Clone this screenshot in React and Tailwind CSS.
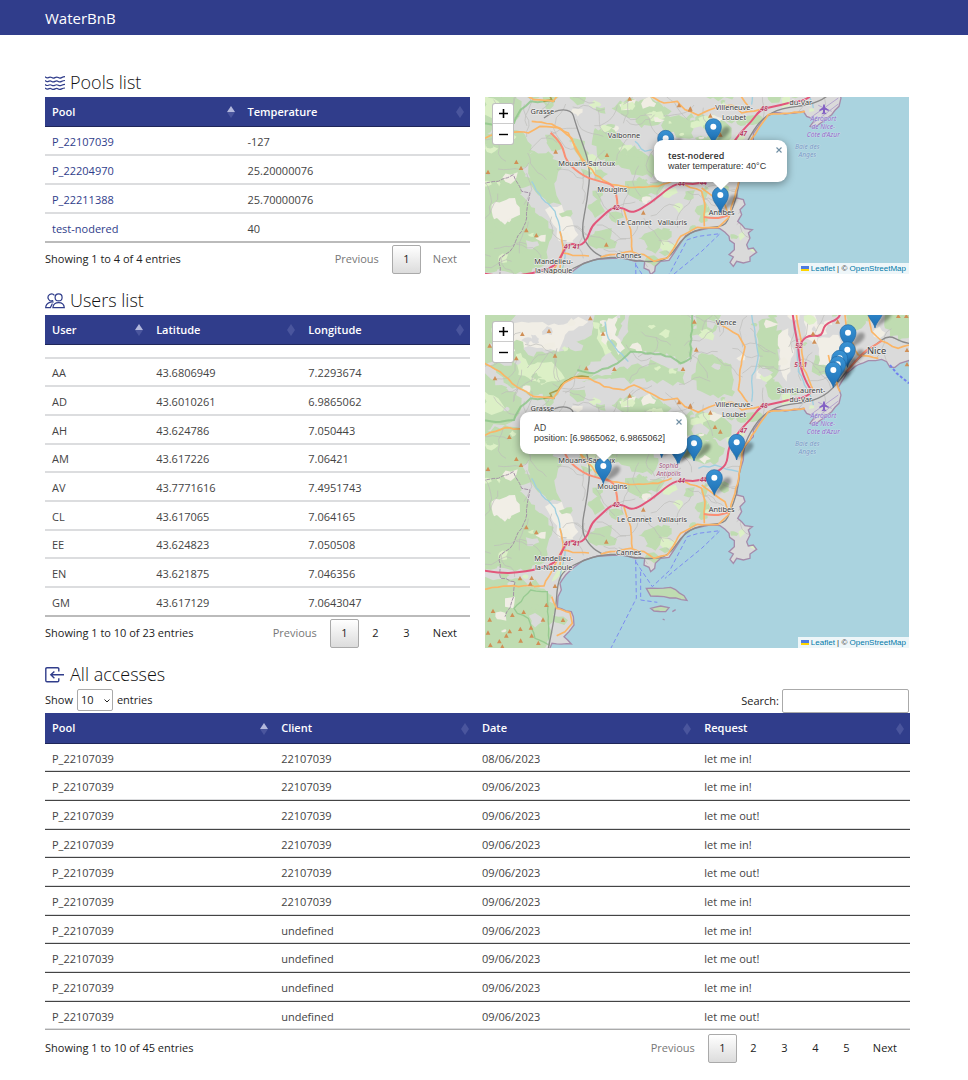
import React from "react";

/* ---------- Map geometry (one shared drawing, three units per pixel) ---------- */

function makeRandom(seed) {
  let s = seed;
  return () => {
    s = (s * 1664525 + 1013904223) % 4294967296;
    return s / 4294967296;
  };
}

function pairs(text) {
  return text.split(" ").map((p) => p.split(",").map(Number));
}

/* Subdivides a line and nudges the middle points so that it looks natural. */
function rough(text, amount, seed, closed) {
  const rnd = makeRandom(seed);
  const pts = pairs(text);
  if (closed) pts.push(pts[0]);
  let d = `M${pts[0][0]} ${pts[0][1]}`;
  for (let i = 1; i < pts.length; i++) {
    const [ax, ay] = pts[i - 1];
    const [bx, by] = pts[i];
    const n = Math.max(1, Math.floor(Math.hypot(bx - ax, by - ay) / 14));
    for (let k = 1; k < n; k++) {
      const t = k / n;
      const x = ax + (bx - ax) * t + (rnd() - 0.5) * amount * 2;
      const y = ay + (by - ay) * t + (rnd() - 0.5) * amount * 2;
      d += `L${x.toFixed(1)} ${y.toFixed(1)}`;
    }
    d += `L${bx} ${by}`;
  }
  return closed ? d + "Z" : d;
}

function curve(text) {
  const p = pairs(text);
  let d = `M${p[0][0]} ${p[0][1]}`;
  for (let i = 1; i < p.length - 1; i++) {
    const mx = (p[i][0] + p[i + 1][0]) / 2;
    const my = (p[i][1] + p[i + 1][1]) / 2;
    d += `Q${p[i][0]} ${p[i][1]} ${mx} ${my}`;
  }
  const l = p[p.length - 1];
  return d + `L${l[0]} ${l[1]}`;
}

const COAST =
  "190,1010 201,985 259,987 237,965 252,950 267,930 265,905 259,890 217,878 219,845 229,825 225,805 242,780 267,757 297,735 337,723 397,721 427,723 452,731 467,727 479,731 477,750 492,757 497,770 509,760 511,745 527,730 552,727 567,705 587,675 602,653 630,640 670,631 705,632 720,643 732,655 734,667 748,677 748,695 732,710 745,717 735,733 745,745 755,730 775,735 795,730 795,717 815,703 805,690 790,693 785,680 795,660 790,645 802,635 780,632 770,620 758,610 770,590 765,575 780,560 775,545 755,540 760,505 763,475 775,435 780,395 795,375 805,365 805,345 820,325 845,295 870,283 900,288 930,285 955,280 965,295 990,305 975,325 990,330 1015,310 1040,290 1062,265 1068,240 1060,217 1070,200 1085,175 1110,155 1150,137 1190,133 1205,140 1215,157 1230,157 1245,145 1290,132";

const COAST_LINE = rough(COAST, 2, 5, false);
const SEA = COAST_LINE + "L1290 1010Z";

const FORESTS = [
  "-10,-10 90,-10 60,60 130,120 220,110 320,60 330,-10 420,-10 400,60 350,130 300,160 250,190 200,250 130,240 70,210 20,160 -10,150",
  "-10,170 50,210 110,250 100,300 60,330 -10,340",
  "-10,350 60,330 120,350 150,400 110,450 140,500 90,540 60,610 90,660 60,700 -10,720",
  "-10,545 80,520 150,570 190,610 200,660 180,740 120,770 60,760 -10,760",
  "-10,785 90,790 160,820 200,840 205,900 185,990 175,1010 -10,1010",
  "120,415 190,400 230,450 210,510 230,560 190,560 150,520",
  "440,-10 620,-10 625,100 600,145 520,110 450,110 400,140 370,100 430,50",
  "290,200 360,180 440,150 510,140 600,170 600,210 500,195 430,200 340,190",
  "380,270 430,240 520,250 560,280 520,320 470,330 430,300",
  "520,300 640,290 700,300 740,330 730,370 650,375 590,360 540,345",
  "330,330 390,320 420,380 470,400 520,430 500,480 440,470 400,440 350,430 320,380",
  "640,120 700,130 740,170 750,230 700,250 650,230 620,180",
  "640,-10 720,-10 700,30 660,70 640,60",
  "820,20 870,10 890,80 880,160 850,210 820,150",
  "600,380 680,370 720,400 700,440 640,440 590,430",
  "420,490 470,490 540,500 510,530 460,545 430,530",
  "650,520 670,520 668,610 648,615",
  "330,640 380,630 390,690 340,690 310,680",
  "310,560 350,540 360,580 330,600",
  "460,660 500,640 560,640 560,690 500,700",
  "990,120 1030,110 1040,160 1010,190 980,170",
  "1080,-10 1140,-10 1130,40 1100,60 1080,30",
  "1200,-10 1290,-10 1290,60 1240,80 1200,40",
  "840,210 880,200 900,240 860,255",
  "180,350 220,360 240,390 200,400",
  "260,360 300,370 310,420 280,430",
];

const PALE = [
  "20,40 110,20 220,30 280,5 310,20 240,60 220,110 140,95 80,110 30,80",
  "370,10 400,0 390,60 420,100 400,120 365,70",
  "20,560 90,540 105,590 60,620 30,610",
  "180,575 230,560 265,620 280,650 262,668 222,670 205,620",
  "960,10 990,0 1010,50 990,90 965,70",
  "880,60 910,40 925,120 905,200 885,160",
  "1000,70 1060,60 1070,120 1050,160 1000,150",
  "60,850 90,845 85,880 60,875",
];

const MEADOW = [
  "0,230 40,250 60,280 20,300 0,290",
  "80,60 130,150 200,140 240,190 170,210 100,180",
  "530,665 570,660 575,690 545,708 525,690",
  "200,800 240,770 235,740 215,770",
  "480,290 530,280 540,300 500,310",
  "400,390 440,380 450,400 420,410",
  "640,300 690,290 700,310 650,325",
  "660,600 668,560 676,600",
  "310,430 340,440 330,470 305,455",
  "890,240 915,230 920,260 890,270",
  "340,20 350,60 380,110 360,120 335,70",
  "760,650 775,640 780,655 765,668",
];

function scatter() {
  const rnd = makeRandom(77);
  const out = [];
  for (let i = 0; i < 330; i++) {
    const x = rnd() * 1230;
    const y = rnd() * 990;
    const r = 5 + rnd() * 15;
    const kind = rnd();
    const pts = [];
    for (let a = 0; a < 8; a++) {
      const q = r * (0.4 + rnd() * 0.9);
      pts.push(
        `${(x + Math.cos((a * Math.PI) / 4) * q * 1.3).toFixed(1)},${(y + Math.sin((a * Math.PI) / 4) * q).toFixed(1)}`,
      );
    }
    const fill = kind < 0.42 ? "#bfdcb1" : kind < 0.6 ? "#dcf0c6" : kind < 0.88 ? "#dadada" : "#f0ede3";
    out.push({ points: pts.join(" "), fill });
  }
  return out;
}

function lanes() {
  const rnd = makeRandom(19);
  const out = [];
  for (let i = 0; i < 170; i++) {
    let x = rnd() * 1250;
    let y = rnd() * 760;
    let a = rnd() * 6.28;
    let d = `M${x.toFixed(0)} ${y.toFixed(0)}`;
    for (let k = 0; k < 6; k++) {
      a += (rnd() - 0.5) * 1.5;
      x += Math.cos(a) * 17;
      y += Math.sin(a) * 17;
      d += `L${x.toFixed(0)} ${y.toFixed(0)}`;
    }
    out.push(d);
  }
  return out.join("");
}

const SCATTER = scatter();
const LANES = lanes();

const MOTORWAYS = [
  "-10,766 47,775 97,773 147,765 197,750 222,730 237,695 257,675 287,685 309,660 319,625 347,600 382,567 417,570 442,587 497,555 557,505 590,495 640,500 690,475 725,450 730,405 738,385 765,345 800,310 825,275 860,267 920,253 960,247 982,230 965,205 945,155 940,95 930,45 922,-10",
  "945,95 950,75 975,60 1010,65 1018,28 1060,12 1068,-10",
];

const PRIMARY = [
  "197,344 232,376 242,431 297,476 347,491 387,501 397,546 397,566",
  "657,597 690,603 730,592",
  "1085,170 1130,115 1170,90 1190,78",
];

const SECONDARY = [
  "-10,140 45,170 95,215 147,245 205,250 237,205 270,187 312,190 357,215 417,225 447,210 497,235 537,255 577,250 600,275 640,292 690,270 740,262 770,285 825,275",
  "-10,365 60,338 130,345 165,325 220,330 260,360 290,420 330,470 380,500 430,508 520,505 560,490",
  "140,310 200,318 250,345 275,400 297,440",
  "700,25 760,60 780,95 765,165 760,225 790,265",
  "417,575 437,635 442,700",
  "347,717 437,700 477,710 507,730 547,720 587,655 637,628 700,628 730,600 750,535 762,480 775,400 810,350 850,290 960,280",
  "147,815 177,813 212,745 232,705 262,712 312,714",
  "-10,825 57,813 147,813",
  "200,845 215,880 255,893 262,925 240,950 215,962",
  "658,625 660,560 650,520 600,500",
  "650,510 690,540 720,560 730,590",
  "934,-5 950,90 955,160 985,225",
  "1080,0 1090,60 1120,120 1180,130",
  "1150,-10 1160,50 1190,78 1240,100 1272,90",
  "1030,120 1050,190 1065,230",
  "225,750 235,690 225,640",
];

const RAILWAYS = [
  "190,1000 212,895 217,805 237,765 297,735 347,720 407,717 437,727 497,732 550,725 600,650 660,628 720,625 735,590 755,540 762,480 772,420 785,370 830,300 890,270 970,262 1030,237 1080,175 1120,130 1170,90 1210,60 1250,80 1272,85",
  "177,300 210,275 260,276 270,310 283,350 317,446 307,546 287,646 317,696 350,716",
];

const STREAMS = [
  "140,490 170,540 210,580 225,640 240,700 230,760 228,800",
  "360,20 370,70 400,110 430,140",
  "800,-10 810,60 820,120 800,200 800,260",
  "925,10 935,90 940,170 975,240 985,270",
  "450,370 480,400 500,395",
  "640,460 690,450 740,465 760,470",
];

const FERRIES = [
  "452,735 454,850 375,1005",
  "467,770 467,855 517,862",
  "452,740 502,815 555,765 607,665 640,655 705,647 650,700 540,790",
];

const PEAKS =
  "316,10 112,57 192,48 14,92 94,130 210,122 304,160 388,162 582,262 30,190 434,242 616,272 594,162 634,104 73,366 9,462 94,432 108,450 212,401 366,411 615,275 676,293 706,350 690,336 475,584 364,680 124,637 154,652 105,790 140,789 136,806 210,813 184,870 116,891 174,914 234,915 24,888 14,914 82,900 138,938 74,949 106,942 9,953 43,979 64,962 107,977 140,962 16,990 52,995 160,984 354,56 628,20 984,56 988,80 1058,20 1264,3 1240,3 1266,105 1266,148";

const REFS = [
  ["48", 837, 272],
  ["47", 775, 346],
  ["52", 942, 92],
  ["51.1", 947, 148],
  ["44", 655, 494],
  ["44", 589, 497],
  ["42", 393, 567],
  ["41", 247, 684],
  ["41", 274, 684],
];

const TOWNS = [
  ["Grasse", 172, 278],
  ["Valbonne", 417, 350],
  ["Mouans-Sartoux", 305, 434],
  ["Mougins", 382, 513],
  ["Le Cannet", 448, 613],
  ["Vallauris", 562, 613],
  ["Cannes", 431, 711],
  ["Mandelieu-", 206, 728],
  ["la-Napoule", 206, 755],
  ["Vence", 723, 21],
  ["Saint-Laurent-", 948, 224],
  ["du-Var", 947, 252],
  ["Villeneuve-", 747, 267],
  ["Loubet", 747, 296],
  ["Antibes", 710, 583],
];

const MARINE = [
  ["Aéroport", 1015, 301, "#8a66c8"],
  ["de Nice-", 1015, 325, "#8a66c8"],
  ["Côte d'Azur", 1015, 349, "#8a66c8"],
  ["Baie des", 967, 384, "#7098c4"],
  ["Anges", 967, 408, "#7098c4"],
];

function Marker({ x, y }) {
  return (
    <g transform={`translate(${x} ${y})`}>
      <path d="M0 52L20 16Q34 -6 48 2Q56 14 36 30Z" fill="#000" opacity="0.32" filter="url(#soft)" />
      <path
        d="M0 53C-5 32 -24 22 -24 0A24 24 0 1 1 24 0C24 22 5 32 0 53Z"
        fill="url(#pin)"
        stroke="#2268a3"
        strokeWidth="2"
      />
      <circle r="9" fill="#fff" />
    </g>
  );
}

/* `covered` lists the place names that a popup or the map's edge hides. */
function MapDrawing({ viewBox, markers, label, covered }) {
  const shown = (list) => list.filter(([t]) => !covered.includes(t));
  return (
    <svg
      viewBox={viewBox}
      preserveAspectRatio="xMinYMin slice"
      className="absolute inset-0 h-full w-full font-['Noto_Sans',sans-serif]"
      role="img"
      aria-label={label}
    >
      <defs>
        <filter id="soft" x="-30%" y="-30%" width="160%" height="160%">
          <feGaussianBlur stdDeviation="5" />
        </filter>
        <linearGradient id="pin" x1="0" y1="0" x2="0" y2="1">
          <stop offset="0" stopColor="#3a93d4" />
          <stop offset="1" stopColor="#1c6fb4" />
        </linearGradient>
      </defs>
      <rect x="-10" y="-10" width="1300" height="1020" fill="#dadada" />
      {FORESTS.map((f, i) => (
        <path key={i} d={rough(f, 10, i + 31, true)} fill="#bfdcb1" />
      ))}
      {MEADOW.map((f, i) => (
        <path key={i} d={rough(f, 5, i + 71, true)} fill="#dcf0c6" />
      ))}
      {PALE.map((f, i) => (
        <path key={i} d={rough(f, 6, i + 51, true)} fill="#f1eee6" />
      ))}
      {SCATTER.map((s, i) => (
        <polygon key={i} points={s.points} fill={s.fill} />
      ))}
      <path d={LANES} fill="none" stroke="#bdbdb9" strokeWidth="2" />
      {STREAMS.map((s) => (
        <path key={s} d={rough(s, 3, 8, false)} fill="none" stroke="#9fcfe0" strokeWidth="4" />
      ))}
      <g fill="none" stroke="#8fc78b" strokeWidth="6" opacity="0.85">
        <path d={rough("-10,315 47,320 87,315 107,275 137,250 177,250 210,250", 3, 3, false)} />
        <path d={rough("277,165 327,175 397,145 437,110 497,115 557,125 587,145 617,130 622,-10", 3, 4, false)} />
        <path d={rough("97,895 87,880 137,825 187,830 192,990 150,970 130,910 97,895", 2, 6, false)} strokeWidth="4" />
      </g>
      <path
        d={rough("-10,500 40,490 85,470 110,520 135,525 125,600 110,640 75,700 45,720 47,790 90,800 80,860 60,905", 3, 9, false)}
        fill="none"
        stroke="#a493a6"
        strokeWidth="3"
        strokeDasharray="12 3"
      />
      <path d={rough("175,250 200,245 195,235 220,225 240,200 275,185 312,186", 3, 10, false)} fill="none" stroke="#a8a04c" strokeWidth="5" />
      <path d={SEA} fill="#aad3df" />
      <path d={COAST_LINE} fill="none" stroke="#a58cab" strokeWidth="4" />
      <g fill="#bfdcb1" stroke="#a58cab" strokeWidth="4">
        <path d={rough("484,820 517,820 557,817 597,842 606,856 537,845 497,843", 2, 2, true)} />
        <path d={rough("497,880 527,873 552,878 542,890 507,888", 1, 2, true)} />
        <path d="M562 890l10-6M533 912l6 3" />
      </g>
      {RAILWAYS.map((r) => (
        <path key={r} d={curve(r)} fill="none" stroke="#8a8a8a" strokeWidth="4" />
      ))}
      {SECONDARY.map((r) => (
        <path key={r} d={rough(r, 2, 12, false)} fill="none" stroke="#fbb566" strokeWidth="5" strokeLinejoin="round" />
      ))}
      {PRIMARY.map((r) => (
        <path key={r} d={curve(r)} fill="none" stroke="#fa8f74" strokeWidth="6" />
      ))}
      {MOTORWAYS.map((r) => (
        <path key={r} d={curve(r)} fill="none" stroke="#e2567a" strokeWidth="6" />
      ))}
      {FERRIES.map((r) => (
        <path key={r} d={`M${r.replaceAll(" ", "L")}`} fill="none" stroke="#7c8cf0" strokeWidth="3" strokeDasharray="13 8" />
      ))}
      <path d="M1215 150L1235 175L1272 205" fill="none" stroke="#7080f0" strokeWidth="6" strokeDasharray="9 6" />
      {pairs(PEAKS).map(([x, y], i) => (
        <path key={i} d={`M${x} ${y - 7}l7 13h-14z`} fill="#d08f55" />
      ))}
      <g stroke="#b4a5cf" strokeWidth="3" fill="none">
        <path d="M975 300L1060 240M985 315L1060 258M1000 262L1040 280" />
      </g>
      <path
        d="M1017 259c3 0 3 5 3 9l11 7v4l-11-4v8l4 4v2l-7-2l-7 2v-2l4-4v-8l-11 4v-4l11-7c0-4 0-9 3-9z"
        fill="#8461c4"
      />
      <g textAnchor="middle" dominantBaseline="central" paintOrder="stroke" strokeLinejoin="round">
        <g fontSize="20" fontStyle="italic" fontWeight="600" fill="#b8325c" stroke="#e6dcdc" strokeWidth="3">
          {shown(REFS).map(([t, x, y]) => (
            <text key={`${t}${x}`} x={x} y={y}>{t}</text>
          ))}
        </g>
        <g fontSize="22" fill="#3d3d3d" stroke="#ececec" strokeWidth="4">
          {shown(TOWNS).map(([t, x, y]) => (
            <text key={t} x={x} y={y}>{t}</text>
          ))}
          {shown([["Nice"]]).map(([t]) => (
            <text key={t} x="1175" y="105" fontSize="28">{t}</text>
          ))}
        </g>
        <g fontSize="19" fontStyle="italic" fill="#a0507a" stroke="#ececec" strokeWidth="3">
          {shown([["Sophia", 551, 450], ["Antipolis", 551, 475]]).map(([t, x, y]) => (
            <text key={t} x={x} y={y}>{t}</text>
          ))}
        </g>
        <g fontSize="20" fontStyle="italic" stroke="#d5e4ec" strokeWidth="2">
          {MARINE.map(([t, x, y, fill]) => (
            <text key={t} x={x} y={y} fill={fill}>{t}</text>
          ))}
        </g>
      </g>
      {markers.map(([x, y]) => (
        <Marker key={`${x}-${y}`} x={x} y={y} />
      ))}
    </svg>
  );
}

function LeafletMap({ viewBox, markers, label, covered, popupClass, popupTitle, popupText }) {
  return (
    <div className="relative mr-px mt-[30px] overflow-hidden bg-[#aad3df]">
      <MapDrawing viewBox={viewBox} markers={markers} label={label} covered={covered} />
      <div className="absolute left-[7px] top-[6px] w-[22px] rounded-[3px] border border-black/25 bg-white">
        <button type="button" aria-label="Zoom in" className="flex h-5 w-full items-center justify-center border-b border-[#ccc]">
          <svg width="9" height="9" viewBox="0 0 9 9" aria-hidden="true">
            <path d="M0 4.5H9M4.5 0V9" stroke="#000" strokeWidth="1.6" />
          </svg>
        </button>
        <button type="button" aria-label="Zoom out" className="flex h-5 w-full items-center justify-center">
          <svg width="9" height="9" viewBox="0 0 9 9" aria-hidden="true">
            <path d="M0 4.5H9" stroke="#000" strokeWidth="1.4" />
          </svg>
        </button>
      </div>
      <div className={`absolute ${popupClass}`}>
        <div className="flex h-[42px] flex-col justify-center rounded-[9px] bg-white px-[14px] pb-px text-[9px] leading-[11px] text-[#333] shadow-[0_2px_9px_rgba(0,0,0,0.4)]">
          {popupTitle}
          <span className="whitespace-nowrap font-['Liberation_Sans',sans-serif]">{popupText}</span>
        </div>
        <svg width="16" height="8" viewBox="0 0 16 8" className="mx-auto block" aria-hidden="true">
          <path d="M0 0H16L8 8Z" fill="#fff" />
        </svg>
        <button type="button" aria-label="Close popup" className="absolute right-[5px] top-[7px]">
          <svg width="6" height="6" viewBox="0 0 6 6" className="block" aria-hidden="true">
            <path d="M.5 .5L5.5 5.5M5.5 .5L.5 5.5" stroke="#6f8ea3" strokeWidth="1.1" />
          </svg>
        </button>
      </div>
      <div className="absolute bottom-0 right-0 flex h-[11px] items-center bg-white/80 px-[3px] font-['Liberation_Sans',sans-serif] text-[8px] leading-[11px] text-[#333]">
        <svg width="8" height="5" viewBox="0 0 8 5" className="mr-[2px]" aria-hidden="true">
          <path fill="#4c7be1" d="M0 0h8v3H0z" />
          <path fill="#ffd500" d="M0 3h8v2H0z" />
        </svg>
        <a href="#leaflet" className="text-[#0078a8]">Leaflet</a>
        <span className="whitespace-pre"> | © </span>
        <a href="#osm" className="text-[#0078a8]">OpenStreetMap</a>
      </div>
    </div>
  );
}

/* ---------- Tables ---------- */

function SortMark({ active }) {
  return (
    <svg width="8" height="12" viewBox="0 0 8 12" className="shrink-0" aria-hidden="true">
      <path d="M0 6H8L4 12Z" fill="#4a559d" />
      <path d="M4 0L8 6H0Z" fill={active ? "#b3b8dc" : "#4a559d"} />
    </svg>
  );
}

function DataTable({ columns, widths, rows, label, dark, rowClass, linkFirst }) {
  const line = dark
    ? "border-[#444] shadow-[inset_0_-1px_0_#dcdddf] border-b group-last:border-[#aaa]"
    : "border-[#dcdddf] border-b-2 group-last:border-[#bbb]";
  return (
    <table aria-label={label} className="w-full table-fixed border-separate border-spacing-0 text-left">
      <colgroup>
        {widths.map((w, i) => (
          <col key={i} className={w} />
        ))}
      </colgroup>
      <thead>
        <tr className={dark ? "h-[31px]" : "h-[30px]"}>
          {columns.map((c, i) => (
            <th
              key={c}
              scope="col"
              aria-sort={i === 0 ? "ascending" : "none"}
              className="border-b border-[#1f2659] bg-[#303d8b] p-0 pl-[7px] pr-[6px] pt-px text-white"
            >
              <button type="button" className="flex w-full items-center justify-between font-semibold">
                {c}
                <SortMark active={i === 0} />
              </button>
            </th>
          ))}
        </tr>
      </thead>
      <tbody className="text-[#444]">
        {rows.map((r, ri) => (
          <tr key={ri} className={`group ${r[0] === "" ? "h-[14px]" : rowClass}`}>
            {r.map((v, ci) => (
              <td key={ci} className={`p-0 pl-[7px] pt-px align-middle leading-[11px] ${line}`}>
                {linkFirst && ci === 0 ? (
                  <a href={`#${v}`} className="text-[#303d8b]">{v}</a>
                ) : (
                  v
                )}
              </td>
            ))}
          </tr>
        ))}
      </tbody>
    </table>
  );
}

function Footer({ info, pages, last, roomy }) {
  return (
    <div className={`flex items-start justify-between text-[#222] ${roomy ? "pt-1" : "pt-[2px]"}`}>
      <div className="leading-[28px]">{info}</div>
      <nav aria-label="Pages" className="flex gap-[2px]">
        <button type="button" className="h-[29px] pl-[13px] pr-[11px] text-[#777]">Previous</button>
        {pages.map((p) => (
          <button
            key={p}
            type="button"
            className={
              p === 1
                ? "h-[29px] w-[29px] rounded-[2px] border border-[#aaa] bg-linear-to-b from-white to-[#dcdcdc]"
                : "h-[29px] w-[29px]"
            }
          >
            {p}
          </button>
        ))}
        <button type="button" className={`h-[29px] pl-[10px] pr-[13px] ${last ? "text-[#777]" : ""}`}>Next</button>
      </nav>
    </div>
  );
}

function Title({ icon, children }) {
  return (
    <h2 className="flex h-[30px] items-center gap-[5px] text-[18px] font-[350] text-[#111]">
      {icon}
      {children}
    </h2>
  );
}

const iconProps = { fill: "none", stroke: "#303d8b", strokeWidth: "1.2", "aria-hidden": true };

function WavesIcon() {
  const wave = "q1.7 1.8 3.4 .9t3.3 0t3.3 0t3.3 0t3.3 0t3.4 -.9";
  return (
    <svg width="20" height="14" viewBox="0 0 20 14" {...iconProps} className="mt-[2px]">
      <path d={`M0 .7${wave}M0 4.5${wave}M0 8.3${wave}M0 12${wave}`} />
    </svg>
  );
}

function UsersIcon() {
  return (
    <svg width="20" height="16" viewBox="0 0 20 16" {...iconProps} className="mt-[2px]">
      <circle cx="13.6" cy="4.4" r="3.5" />
      <path d="M7.9 14.6C8.2 11.4 10.4 9.6 13.7 9.6S19 11.4 19.3 14.6Z" />
      <path d="M9.4 2.4A3.5 3.5 0 1 0 8.2 7.6M8.2 7.6C7.6 8 6.4 8 5.6 7.8" />
      <path d="M8.6 9.2C7.4 8.9 5.6 9 4.2 9.6C2 10.6 .8 12.2 .7 14.6H5.4L7.4 10.6" />
    </svg>
  );
}

function EnterIcon() {
  return (
    <svg width="20" height="16" viewBox="0 0 20 16" {...iconProps} strokeWidth="1.4" className="mt-[2px]">
      <path d="M13.8 4.5V2Q13.8 .8 12.6 .8H2Q.8 .8 .8 2V13.6Q.8 14.8 2 14.8H12.6Q13.8 14.8 13.8 13.6V11.2" />
      <path d="M19 7.8H6M9.4 4.4L5.8 7.8L9.4 11.2" />
    </svg>
  );
}

const POOLS = [
  ["P_22107039", "-127"],
  ["P_22204970", "25.20000076"],
  ["P_22211388", "25.70000076"],
  ["test-nodered", "40"],
];

const USERS = [
  ["", "", ""],
  ["AA", "43.6806949", "7.2293674"],
  ["AD", "43.6010261", "6.9865062"],
  ["AH", "43.624786", "7.050443"],
  ["AM", "43.617226", "7.06421"],
  ["AV", "43.7771616", "7.4951743"],
  ["CL", "43.617065", "7.064165"],
  ["EE", "43.624823", "7.050508"],
  ["EN", "43.621875", "7.046356"],
  ["GM", "43.617129", "7.0643047"],
];

const ACCESSES = [
  ["P_22107039", "22107039", "08/06/2023", "let me in!"],
  ["P_22107039", "22107039", "09/06/2023", "let me in!"],
  ["P_22107039", "22107039", "09/06/2023", "let me out!"],
  ["P_22107039", "22107039", "09/06/2023", "let me in!"],
  ["P_22107039", "22107039", "09/06/2023", "let me out!"],
  ["P_22107039", "22107039", "09/06/2023", "let me in!"],
  ["P_22107039", "undefined", "09/06/2023", "let me in!"],
  ["P_22107039", "undefined", "09/06/2023", "let me out!"],
  ["P_22107039", "undefined", "09/06/2023", "let me in!"],
  ["P_22107039", "undefined", "09/06/2023", "let me out!"],
];

const POOL_MARKERS = [[542, 361], [685, 326], [706, 531]];
const USER_MARKERS = [
  [1170, -14], [1089, 53], [1087, 104], [1064, 130], [1058, 148], [1045, 165],
  [755, 382], [530, 375], [578, 393], [582, 392], [627, 385], [355, 453], [688, 488],
];

export default function App() {
  return (
    <div className="bg-white font-['Open_Sans','Noto_Sans',sans-serif] text-[11px] text-[#222]">
      <header className="flex h-[35px] items-center bg-[#303d8b] pl-[45px] pt-px text-white">
        <a href="#home" className="text-[15px]">WaterBnB</a>
      </header>
      <main className="flex flex-col gap-[11px] pb-[17px] pl-[45px] pr-[58px] pt-8">
        <section className="grid grid-cols-2 gap-x-[15px]">
          <div>
            <Title icon={<WavesIcon />}>Pools list</Title>
            <DataTable
              label="Pools"
              columns={["Pool", "Temperature"]}
              widths={["w-[46%]", "w-[54%]"]}
              rows={POOLS}
              rowClass="h-[29px]"
              linkFirst
            />
            <Footer info="Showing 1 to 4 of 4 entries" pages={[1]} last />
          </div>
          <LeafletMap
            label="Map of the pools"
            viewBox="0 237 1272 531"
            markers={POOL_MARKERS}
            covered={["Saint-Laurent-", "Vence", "Nice", "52", "51.1", "Sophia", "Antipolis"]}
            popupClass="left-[169px] top-[43px] w-[133px]"
            popupTitle={<b className="font-semibold">test-nodered</b>}
            popupText="water temperature: 40°C"
          />
        </section>
        <section className="grid grid-cols-2 gap-x-[15px]">
          <div>
            <Title icon={<UsersIcon />}>Users list</Title>
            <DataTable
              label="Users"
              columns={["User", "Latitude", "Longitude"]}
              widths={["w-[24.5%]", "w-[35.8%]", "w-[39.7%]"]}
              rows={USERS}
              rowClass="h-[29px] [&:nth-child(3n+2)]:h-[28px]"
            />
            <Footer info="Showing 1 to 10 of 23 entries" pages={[1, 2, 3]} />
          </div>
          <LeafletMap
            label="Map of the users"
            viewBox="0 0 1272 999"
            markers={USER_MARKERS}
            covered={["Valbonne"]}
            popupClass="left-[35px] top-[97px] w-[167px]"
            popupTitle={<span>AD</span>}
            popupText="position: [6.9865062, 6.9865062]"
          />
        </section>
        <section>
          <Title icon={<EnterIcon />}>All accesses</Title>
          <div className="flex h-6 items-start justify-between">
            <div className="flex h-[22px] items-center gap-1">
              <label htmlFor="length">Show</label>
              <span className="relative flex">
                <select
                  id="length"
                  defaultValue="10"
                  className="h-[22px] w-[36px] appearance-none rounded-[2px] border border-[#aaa] bg-white pl-[3px]"
                >
                  <option>10</option>
                  <option>25</option>
                  <option>50</option>
                  <option>100</option>
                </select>
                <svg width="6" height="4" viewBox="0 0 6 4" className="pointer-events-none absolute right-[3px] top-[10px]" fill="none" stroke="#222" aria-hidden="true">
                  <path d="M.5 .5L3 3L5.5 .5" />
                </svg>
              </span>
              <label htmlFor="length">entries</label>
            </div>
            <div className="flex h-6 items-center gap-[3px] pr-px">
              <label htmlFor="search">Search:</label>
              <input id="search" type="search" className="h-6 w-[127px] rounded-[2px] border border-[#aaa] bg-white px-1" />
            </div>
          </div>
          <DataTable
            label="Accesses"
            columns={["Pool", "Client", "Date", "Request"]}
            widths={["w-[26.5%]", "w-[23.2%]", "w-[25.7%]", "w-[24.6%]"]}
            rows={ACCESSES}
            rowClass="h-[29px] [&:nth-child(3n+1)]:h-[28px]"
            dark
          />
          <Footer info="Showing 1 to 10 of 45 entries" pages={[1, 2, 3, 4, 5]} roomy />
        </section>
      </main>
    </div>
  );
}
